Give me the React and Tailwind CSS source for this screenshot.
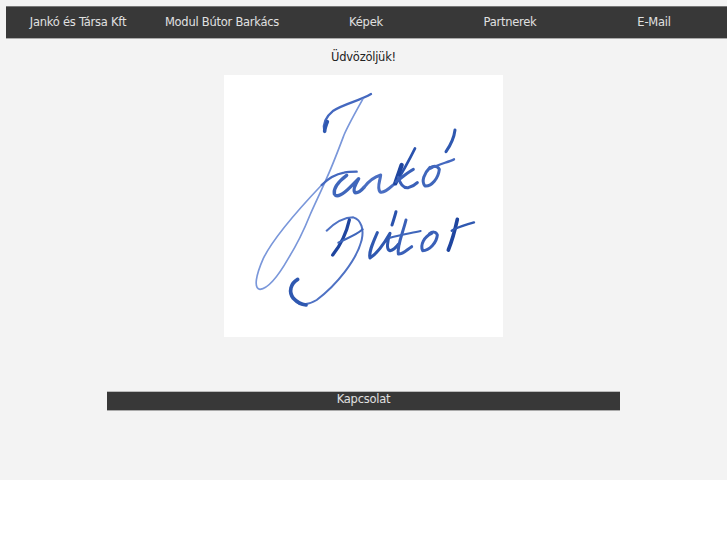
import React from "react";

const menu = ["Jankó és Társa Kft", "Modul Bútor Barkács", "Képek", "Partnerek", "E-Mail"];

// Signature, coordinates follow the logo box (1 unit = 1/3 px)
const Signature = () => (
  <svg viewBox="12 15 837 786" className="block h-full w-full blur-[0.5px]" fill="none" strokeLinecap="round" strokeLinejoin="round">
    {/* J */}
    <path d="M453 72C420 92 375 100 340 122C318 140 308 160 313 183" stroke="#4468bf" strokeWidth="7" />
    <path d="M322 155C318 165 314 175 314 184" stroke="#2f58b0" strokeWidth="11" />
    <path d="M428 88C405 130 385 165 372 195C355 240 340 280 322 320C305 360 290 390 270 435C250 485 230 525 205 565C185 600 150 655 120 658C100 655 108 615 130 565C155 515 210 445 305 345" stroke="#7a97da" strokeWidth="5" />
    {/* a n k o */}
    <path d="M305 345C325 325 350 312 372 308C385 305 398 305 410 305" stroke="#4468bf" strokeWidth="7" />
    <path d="M380 316C355 335 340 355 343 372C350 385 370 372 390 352L416 326C405 345 398 362 405 368C415 370 425 360 432 352" stroke="#3f66bb" strokeWidth="10" />
    <path d="M432 352C445 335 465 320 482 315C480 335 470 352 480 366C495 370 510 352 525 340" stroke="#4a6ec2" strokeWidth="9" />
    <path d="M585 235C570 265 555 295 528 338" stroke="#2a52ad" strokeWidth="8" />
    <path d="M545 285C540 300 533 318 526 340" stroke="#1f459f" strokeWidth="13" />
    <path d="M528 335C550 320 565 305 580 298M535 322C540 340 550 355 565 353C575 350 585 345 592 338" stroke="#3a60b8" strokeWidth="9" />
    <path d="M630 292C612 310 603 335 615 348C635 350 655 325 658 298C650 285 638 288 630 295" stroke="#3f66bb" strokeWidth="9" />
    <path d="M632 295C660 282 685 276 702 268" stroke="#4468bf" strokeWidth="7" />
    <path d="M705 180C702 205 692 225 678 245" stroke="#2f58b0" strokeWidth="9" />
    {/* B */}
    <path d="M320 482C345 458 375 442 400 442C425 450 432 480 425 510C410 570 350 645 290 690C265 705 240 708 228 695" stroke="#4f72c4" strokeWidth="6" />
    <path d="M233 628C212 640 205 665 220 685C232 698 245 704 258 705" stroke="#2f58b0" strokeWidth="11" />
    <path d="M388 450C378 495 358 530 338 555" stroke="#1f459f" strokeWidth="10" />
    <path d="M355 518C380 505 410 495 428 478" stroke="#3f66bb" strokeWidth="6" />
    {/* u t o r */}
    <path d="M472 488C458 520 445 548 450 564C465 555 490 525 510 490C502 515 498 540 510 542C520 540 530 530 536 522" stroke="#2f58b0" strokeWidth="9" />
    <path d="M528 425C525 438 520 452 516 465" stroke="#2a52ad" strokeWidth="9" />
    <path d="M558 450C548 490 530 530 535 552C545 555 560 540 575 530" stroke="#3a60b8" strokeWidth="9" />
    <path d="M510 503C540 495 570 490 602 483" stroke="#3f66bb" strokeWidth="6" />
    <path d="M635 490C612 500 600 525 608 542C628 542 650 518 652 495C648 483 636 485 628 492" stroke="#3a60b8" strokeWidth="9" />
    <path d="M712 448C705 480 695 515 685 540" stroke="#1f459f" strokeWidth="11" />
    <path d="M695 482C715 470 738 465 762 457" stroke="#2f58b0" strokeWidth="7" />
  </svg>
);

const App = () => {
  return (
    <div className="h-[545px] overflow-hidden bg-white font-['DejaVu_Sans',sans-serif] text-[11.5px] tracking-[-0.25px]">
      <div className="h-[480px] bg-[#f3f3f3] pt-1.5">
        <div className="ml-1.5 flex h-[33px] w-[730px] items-center border-t border-b border-t-[#777] border-b-[#aaa] bg-[#383838] text-[#e0e0e0]">
          {menu.map((item) => (
            <div key={item} className="w-36 shrink-0 text-center">
              {item}
            </div>
          ))}
        </div>
        <p className="mt-2 h-[19px] text-center leading-[20px] text-[#222]">Üdvözöljük!</p>
        <div className="mx-auto mt-[9px] h-[262px] w-[279px] bg-white">
          <Signature />
        </div>
        <div className="ml-[107px] mt-[54px] h-[20px] w-[513px] border-t border-b border-t-[#bbb] border-b-[#aaa] bg-[#383838] text-center leading-[14px] text-[#e0e0e0]">
          Kapcsolat
        </div>
      </div>
    </div>
  );
};

export default App;
